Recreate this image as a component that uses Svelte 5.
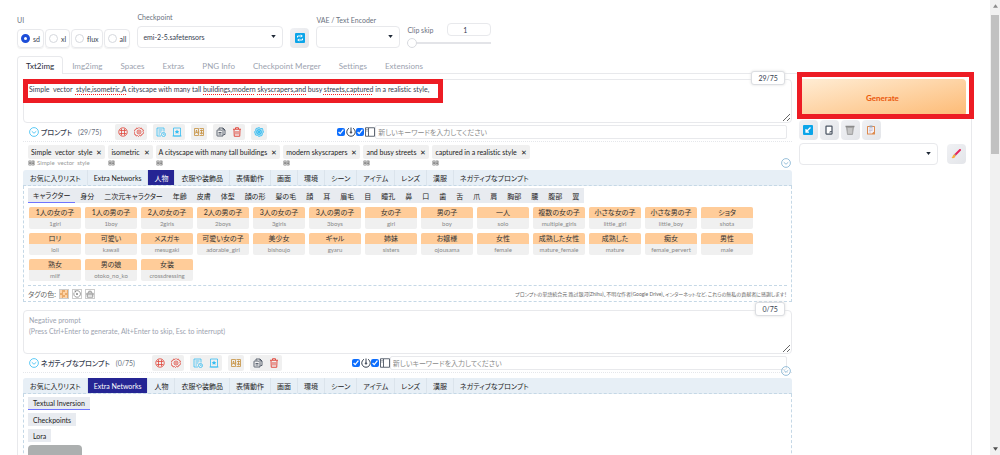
<script>
  const modes = ['sd', 'xl', 'flux', 'all'];
  const pages = ['Txt2img', 'Img2img', 'Spaces', 'Extras', 'PNG Info', 'Checkpoint Merger', 'Settings', 'Extensions'];
  const groups = [
    'お気に入りリスト', 'Extra Networks', '人物', '衣服や装飾品', '表情動作', '画面',
    '環境', 'シーン', 'アイテム', 'レンズ', '漢服', 'ネガティブなプロンプト'
  ];
  const subgroups = [
    'キャラクター', '身分', '二次元キャラクター', '年齢', '皮膚', '体型', '顔の形', '髪の毛', '顔', '耳',
    '眉毛', '目', '瞳孔', '鼻', '口', '歯', '舌', '爪', '肩', '胸部', '腰', '腹部', '翼'
  ];
  const cards = [
    ['1人の女の子', '1girl'], ['1人の男の子', '1boy'], ['2人の女の子', '2girls'], ['2人の男の子', '2boys'],
    ['3人の女の子', '3girls'], ['3人の男の子', '3boys'], ['女の子', 'girl'], ['男の子', 'boy'], ['一人', 'solo'],
    ['複数の女の子', 'multiple_girls'], ['小さな女の子', 'little_girl'], ['小さな男の子', 'little_boy'], ['ショタ', 'shota'],
    ['ロリ', 'loli'], ['可愛い', 'kawaii'], ['メスガキ', 'mesugaki'], ['可愛い女の子', 'adorable_girl'],
    ['美少女', 'bishoujo'], ['ギャル', 'gyaru'], ['姉妹', 'sisters'], ['お嬢様', 'ojousama'], ['女性', 'female'],
    ['成熟した女性', 'mature_female'], ['成熟した', 'mature'], ['痴女', 'female_pervert'], ['男性', 'male'],
    ['熟女', 'milf'], ['男の娘', 'otoko_no_ko'], ['女装', 'crossdressing']
  ];
  const chips = [
    { text: 'Simple  vector  style', local: 'Simple  vector  style' },
    { text: 'isometric' },
    { text: 'A cityscape with many tall buildings' },
    { text: 'modern skyscrapers' },
    { text: 'and busy streets' },
    { text: 'captured in a realistic style' }
  ];
  // [text, flagged by the spell checker]
  const pieces = [
    ['Simple  vector  ', false], ['style,isometric,A', true], [' cityscape with many tall ', false],
    ['buildings,modern', true], [' ', false], ['skyscrapers,and', true], [' busy ', false],
    ['streets,captured', true], [' in a realistic style,', false]
  ];

  let mode = $state('sd');
  let prompt = $state(pieces.map((p) => p[0]).join(''));
  let negative = $state('');
  let skip = $state(1);
</script>

{#snippet icon(name)}
  <svg class="icon" viewBox="0 0 20 20" fill="none" stroke="currentColor" stroke-width="1.6" aria-hidden="true">
    {#if name === 'globe'}
      <circle cx="10" cy="10" r="8.5" />
      <path d="M3 7h14M3 13h14M7 3v14M13 3v14" />
    {:else if name === 'gear'}
      <path d="M10 1l2 2 3-1 1 3 3 1-1 3 1 2-1 3-3 1-1 3-3-1-2 2-2-2-3 1-1-3-3-1 1-3-1-2 1-3 3-1 1-3 3 1z" />
      <circle cx="10" cy="10" r="4" /><circle cx="10" cy="10" r="1" />
    {:else if name === 'history'}
      <path d="M16 9V2H2v16h8M5 6h8M5 10h6M5 14h3" />
      <circle cx="15" cy="15" r="4" /><path d="M15 13v2h2" />
    {:else if name === 'favorite'}
      <path d="M3 2h14v16H3zM1 18h18" />
      <path d="M10 5l1.500 3 3 .4-2 2 .5 3-3-1.500-3 1.500.5-3-2-2 3-.4z" fill="currentColor" stroke="none" />
    {:else if name === 'translate'}
      <path d="M1 3h8v14H1zM11 3h8v14h-8M3 13l2-7 2 7M4 11h3M12 7h6M15 5v10M12 14l3-4 3 4M9 10h2" />
    {:else if name === 'copy'}
      <path d="M6 5V2h8l4 4v9h-3M14 2v4h4" />
      <path d="M3 6h8l3 3v9H3a1 1 0 0 1-1-1V7a1 1 0 0 1 1-1zM5 11h6M5 14h6" />
    {:else if name === 'trash'}
      <path d="M2 4.500h16M7 4V1.500h6V4M4 5l.5 13.500h11L16 5M8 8v7M12 8v7" stroke-width="2" />
    {:else if name === 'ai'}
      <path d="M10 1l3 2 4 0 1 4 1 3-2 3-1 4-4 1-2 1-3-2-4-1-1-4-1-2 2-3 1-4 4-1z" fill="currentColor" fill-opacity=".35" />
      <circle cx="10" cy="10" r="5" /><path d="M10 5v10M5 10h10M6 6l8 8M14 6l-8 8" />
    {:else if name === 'chevron'}
      <circle cx="10" cy="10" r="8.800" /><path d="M5.500 8.500l4.500 4 4.500-4" />
    {:else if name === 'power'}
      <path d="M6 2.500a8.500 8.500 0 1 0 8 0M10 1v9" stroke-width="2" /><circle cx="10" cy="11" r="1.500" fill="currentColor" />
    {:else if name === 'panel'}
      <path d="M1 1.500h18v17H1zM7 2v16M3 5h2M3 8h2" />
    {:else if name === 'reset'}
      <path d="M5 3.500A8.300 8.300 0 1 1 3 6M5 1v3.500h3" /><circle cx="10" cy="10" r="1.500" fill="currentColor" />
    {:else if name === 'brush'}
      <path d="M2 8h16v4H2zM7 8V3h6v5M3 12v6h14v-6" />
    {:else if name === 'sync'}
      <rect x="0" y="0" width="20" height="20" rx="2" fill="#0ba5e9" stroke="none" />
      <path d="M5 9V6h9M12 3.500L14.500 6 12 8.500M15 11v3H6M8 11.500L5.500 14 8 16.500" stroke="#fff" stroke-width="2" />
    {:else if name === 'restore'}
      <rect x="0" y="0" width="20" height="20" rx="2" fill="#0ba5e9" stroke="none" />
      <path d="M15 5l-8 8M6 8v6h6" stroke="#fff" stroke-width="2.500" />
    {:else if name === 'page'}
      <rect x="4" y="2" width="12" height="16" rx="1" fill="#fff" stroke="#4b5563" stroke-width="2.500" />
      <path d="M12 17v-4h4" stroke="#4b5563" />
    {:else if name === 'bin'}
      <path d="M3 4l2 15h10l2-15z" fill="#b6b6b6" stroke="#9a9a9a" /><path d="M1 3h18" stroke="#8b8b8b" stroke-width="3" />
      <path d="M8 6v11M12 6v11" stroke="#ddd" />
    {:else if name === 'clipboard'}
      <rect x="2" y="2" width="16" height="17" rx="1" fill="#dd8a4c" stroke="none" />
      <path d="M4 4h12v9l-4 4H4z" fill="#f3f0f7" stroke="none" /><path d="M7 1h6v4H7z" fill="#9aa5b5" stroke="none" />
      <path d="M6 8h8M6 11h7M6 14h4" stroke="#a9a0b8" stroke-width="1" />
    {:else if name === 'paint'}
      <path d="M18 2L9 11" stroke="#e6245c" stroke-width="4" stroke-linecap="round" />
      <path d="M9 11l-2 2" stroke="#8d99a8" stroke-width="4" /><path d="M7 11c-4 0-3 5-6 7 5 1 8-1 8-5z" fill="#fbab3c" stroke="none" />
    {/if}
  </svg>
{/snippet}

{#snippet arrow()}
  <svg class="arrow" viewBox="0 0 6 4" aria-hidden="true"><path d="M0 0h6L3 4z" fill="currentColor" /></svg>
{/snippet}

{#snippet toolbar(title, count, positive)}
  <div class="toolbar">
    <button class="fold" aria-label="折りたたむ">{@render icon('chevron')}</button>
    <strong>{title}</strong>
    <span class="count">({count})</span>
    <div class="tools">
      <div class="tool red">
        <button aria-label="言語">{@render icon('globe')}</button>
        <button aria-label="設定">{@render icon('gear')}</button>
      </div>
      <div class="tool blue">
        <button aria-label="履歴">{@render icon('history')}</button>
        <button aria-label="お気に入り">{@render icon('favorite')}</button>
      </div>
      <div class="tool gold"><button aria-label="翻訳">{@render icon('translate')}</button></div>
      <div class="tool">
        <button aria-label="コピー">{@render icon('copy')}</button>
        <button class="red" aria-label="削除">{@render icon('trash')}</button>
      </div>
      {#if positive}
        <div class="tool blue"><button aria-label="AI">{@render icon('ai')}</button></div>
      {/if}
    </div>
    <label class="toggle"><input type="checkbox" checked aria-label="自動入力" />{@render icon('power')}</label>
    <label class="toggle"><input type="checkbox" checked aria-label="パネル" />{@render icon('panel')}</label>
    <input class="keyword" type="text" placeholder="新しいキーワードを入力してください" aria-label="キーワード" />
  </div>
{/snippet}

{#snippet groupTabs(active)}
  <div class="groups">
    {#each groups as g}<button class:active={g === active}>{g}</button>{/each}
  </div>
{/snippet}

<div class="window">
  <main>
    <header>
      <fieldset class="field">
        <legend>UI</legend>
        <div class="radios">
          {#each modes as m}
            <label><input type="radio" name="mode" value={m} bind:group={mode} />{m}</label>
          {/each}
        </div>
      </fieldset>
      <div class="field ckpt">
        <label for="ckpt">Checkpoint</label>
        <div class="select">
          <select id="ckpt"><option>emi-2-5.safetensors</option></select>
          {@render arrow()}
        </div>
      </div>
      <button class="square" aria-label="Refresh">{@render icon('sync')}</button>
      <div class="field vae">
        <label for="vae">VAE / Text Encoder</label>
        <div class="select">
          <select id="vae"><option></option></select>
          {@render arrow()}
        </div>
      </div>
      <div class="clip">
        <div class="clip-head">
          <label for="skip">Clip skip</label>
          <input id="skip" type="text" bind:value={skip} />
        </div>
        <input type="range" min="1" max="12" bind:value={skip} aria-label="Clip skip" />
      </div>
    </header>

    <nav>
      {#each pages as p, i}<button class:active={i === 0}>{p}</button>{/each}
    </nav>

    <div class="panel">
      <div class="col-main">
        <div class="prompt">
          <div class="spell" aria-hidden="true">{#each pieces as [text, bad]}<span class:bad>{text}</span>{/each}</div>
          <textarea bind:value={prompt} aria-label="Prompt" spellcheck="false"></textarea>
          <span class="tokens">29/75</span>
          <div class="mark mark-prompt"></div>
        </div>
        {@render toolbar('プロンプト', '29/75', true)}
        <div class="chips">
          {#each chips as c}
            <div class="chip">
              <span class="chip-text">{c.text}<button aria-label="削除">✕</button></span>
              <span class="chip-local">{@render icon('translate')}{c.local ?? ''}</span>
            </div>
          {/each}
          <button class="more" aria-label="もっと見る">{@render icon('chevron')}</button>
        </div>
        {@render groupTabs('人物')}
        <div class="tags">
          <div class="subgroups">
            {#each subgroups as s, i}<button class:active={i === 0}>{s}</button>{/each}
          </div>
          <div class="cards">
            {#each cards as [local, tag]}
              <button class="card"><b>{local}</b><span>{tag}</span></button>
            {/each}
          </div>
          <footer>
            <span>タグの色:</span>
            <button class="swatch" aria-label="色"></button>
            <button aria-label="リセット">{@render icon('reset')}</button>
            <button aria-label="クリア">{@render icon('brush')}</button>
            <small>プロンプトの単語統合元 路过银河(Zhihu)、不明な作者(Google Drive)、インターネットなど, これらの無私の貢献者に感謝します！</small>
          </footer>
        </div>

        <div class="prompt negative">
          <textarea
            bind:value={negative}
            aria-label="Negative prompt"
            placeholder={'Negative prompt\n(Press Ctrl+Enter to generate, Alt+Enter to skip, Esc to interrupt)'}
          ></textarea>
          <span class="tokens">0/75</span>
        </div>
        {@render toolbar('ネガティブなプロンプト', '0/75', false)}
        <div class="chips empty">
          <button class="more" aria-label="もっと見る">{@render icon('chevron')}</button>
        </div>
        {@render groupTabs('Extra Networks')}
        <div class="tags networks">
          <button class="active">Textual Inversion</button>
          <button>Checkpoints</button>
          <button>Lora</button>
          <div class="thumb"></div>
        </div>
      </div>

      <div class="col-side">
        <div class="run">
          <button class="generate">Generate</button>
          <div class="mark mark-run"></div>
        </div>
        <div class="actions">
          <button class="square" aria-label="Restore">{@render icon('restore')}</button>
          <button class="square" aria-label="Paste">{@render icon('page')}</button>
          <button class="square" aria-label="Clear">{@render icon('bin')}</button>
          <button class="square" aria-label="Apply style">{@render icon('clipboard')}</button>
        </div>
        <div class="styles">
          <div class="select">
            <select aria-label="Styles"><option></option></select>
            {@render arrow()}
          </div>
          <button class="square" aria-label="Edit styles">{@render icon('paint')}</button>
        </div>
      </div>
    </div>
  </main>

  <div class="scroll" aria-hidden="true">
    <svg viewBox="0 0 6 4"><path d="M0 4h6L3 0z" fill="#8a8a8a" /></svg>
    <div class="bar"></div>
    <svg viewBox="0 0 6 4"><path d="M0 0h6L3 4z" fill="#505050" /></svg>
  </div>
</div>

<style>
  :global(body) {
    background: #fff;
  }
  .window {
    --line: #e8e9ec;
    display: grid;
    grid-template-columns: 1fr 10px;
    height: 100vh;
    overflow: hidden;
    font: 7px/12px Lato, 'Noto Sans CJK JP', sans-serif;
    font-feature-settings: 'palt', 'liga' 0;
    color: #374151;
  }
  .window * {
    box-sizing: border-box;
  }
  button,
  input,
  select,
  textarea {
    margin: 0;
    padding: 0;
    border: 0;
    background: none;
    color: inherit;
    font: inherit;
    font-feature-settings: inherit;
  }
  button {
    white-space: nowrap;
  }
  .icon {
    display: block;
    width: 10px;
    height: 10px;
    flex-shrink: 0;
  }
  main {
    min-width: 0;
    padding: 0 18px 0 17px;
    overflow: hidden;
  }

  header {
    display: flex;
    align-items: flex-end;
    gap: 7px;
    height: 48px;
  }
  .field {
    display: flex;
    flex-direction: column;
    margin: 0;
    padding: 0;
    border: 0;
    min-width: 0;
    color: #6b7280;
  }
  .radios {
    display: flex;
    gap: 1px;
    padding-top: 3px;
  }
  legend {
    padding: 0;
  }
  .radios label {
    display: flex;
    align-items: center;
    gap: 3px;
    height: 19px;
    padding: 0 3px;
    border: 1px solid var(--line);
    border-radius: 4px;
    box-shadow: 0 1px 1px #f1f1f1;
    color: #374151;
  }
  .radios input {
    appearance: none;
    width: 9px;
    height: 9px;
    border: 1px solid #d5d8dd;
    border-radius: 50%;
    background: #fff;
  }
  .radios input:checked {
    border: 3px solid #1d4ed8;
  }
  .ckpt {
    width: 146px;
    gap: 3px;
  }
  .vae {
    width: 84px;
  }
  .select {
    position: relative;
    height: 22px;
    flex: 1 0 22px;
  }
  .select select {
    appearance: none;
    width: 100%;
    height: 100%;
    padding: 0 5px;
    border: 1px solid var(--line);
    border-radius: 4px;
    background: #fff;
    color: #374151;
  }
  .arrow {
    position: absolute;
    right: 7px;
    top: 9px;
    width: 5px;
    height: 3px;
    color: #1f2937;
  }
  .square {
    display: grid;
    place-items: center;
    width: 19px;
    height: 20px;
    border-radius: 4px;
    background: linear-gradient(135deg, #f0f1f4, #e3e5e9);
  }
  .clip {
    width: 84px;
  }
  .clip-head {
    display: flex;
    justify-content: space-between;
    align-items: center;
    color: #6b7280;
  }
  .clip-head input {
    width: 44px;
    height: 13px;
    border: 1px solid var(--line);
    border-radius: 4px;
    text-align: center;
    padding-right: 8px;
    color: #374151;
  }
  .clip > input {
    appearance: none;
    display: block;
    width: 100%;
    height: 10px;
    margin-top: 2px;
    background: linear-gradient(#e3e4e8, #e3e4e8) center / 100% 2px no-repeat;
  }
  .clip > input::-webkit-slider-thumb {
    appearance: none;
    width: 10px;
    height: 10px;
    border: 1px solid #d9dbe0;
    border-radius: 50%;
    background: #fff;
  }

  nav {
    display: flex;
    height: 18px;
    margin: 8px 0 -1px;
  }
  nav button {
    padding: 0 8px;
    border: 1px solid transparent;
    border-bottom: 0;
    font-size: 8px;
    color: #9ca3af;
  }
  nav button.active {
    position: relative;
    border-color: var(--line);
    border-radius: 4px 4px 0 0;
    background: #fff;
    color: #1f2937;
  }
  .panel {
    display: grid;
    grid-template-columns: 46fr 10fr;
    gap: 7px;
    min-height: 400px;
    padding: 5px 5px 0;
    border: 1px solid var(--line);
  }
  .col-main {
    min-width: 0;
  }

  .prompt {
    position: relative;
    height: 44px;
  }
  .prompt textarea,
  .spell {
    position: relative;
    display: block;
    width: 100%;
    height: 100%;
    padding: 4px 5px;
    border: 1px solid var(--line);
    border-radius: 4px;
    line-height: 11px;
    white-space: pre-wrap;
  }
  .spell {
    position: absolute;
    inset: 0;
    border-color: transparent;
    color: transparent;
  }
  .bad {
    text-decoration-line: underline;
    text-decoration-style: dotted;
    text-decoration-color: #ff2020;
    text-decoration-thickness: 1px;
    text-underline-offset: 2px;
  }
  .negative {
    margin-top: 8px;
  }
  textarea::placeholder {
    color: #9ca3af;
  }
  .tokens {
    position: absolute;
    right: 7px;
    top: -8px;
    padding: 0 6px;
    border: 1px solid #dcdee2;
    border-radius: 3px;
    background: #fff;
    box-shadow: 0 0 3px #ddd;
  }
  .mark {
    position: absolute;
    border: 5px solid #ed1c24;
    pointer-events: none;
  }
  .mark-prompt {
    left: 0;
    top: 0;
    width: 420px;
    height: 24px;
  }

  .toolbar {
    display: flex;
    align-items: center;
    height: 19px;
    padding: 0 5px 0 6px;
    border-bottom: 1px dotted #e5e7eb;
  }
  .fold,
  .blue {
    color: #35bdf2;
  }
  .toolbar strong {
    margin: 0 6px 0 2px;
    font-weight: 500;
  }
  .count {
    min-width: 22px;
    margin-right: 14px;
    color: #6b7280;
  }
  .tools {
    display: flex;
    gap: 6px;
    margin-right: 70px;
  }
  .tool {
    display: flex;
    gap: 6px;
    padding: 3px;
    border-radius: 2px;
    background: #f0f0f0;
  }
  .red {
    color: #e04a3f;
  }
  .gold {
    color: #c58f3c;
  }
  .toggle {
    display: flex;
    align-items: center;
    gap: 1px;
  }
  .toggle input {
    width: 8px;
    height: 8px;
    accent-color: #0d6efd;
  }
  .keyword {
    flex: 1;
    min-width: 0;
    height: 14px;
    padding: 0 2px;
    border: 1px solid var(--line);
    border-radius: 2px;
  }
  .keyword::placeholder {
    color: #8a8a8a;
  }

  .chips {
    position: relative;
    display: flex;
    gap: 3px;
    height: 28px;
    padding: 3px 5px 0;
  }
  .chips.empty {
    height: 5px;
  }
  .chip-text {
    display: flex;
    gap: 4px;
    height: 14px;
    padding: 0 3px;
    border-radius: 2px;
    background: #f0f0f0;
    line-height: 14px;
    white-space: pre;
    color: #222;
  }
  .chip-local {
    display: flex;
    align-items: center;
    gap: 2px;
    height: 8px;
    font-size: 6px;
    line-height: 8px;
    white-space: pre;
    color: #999;
  }
  .chip-local .icon {
    width: 7px;
    height: 6px;
    color: #444;
  }
  .more {
    position: absolute;
    right: 1px;
    bottom: 2px;
    color: #7fb0d0;
  }

  .groups {
    display: flex;
    height: 16px;
    padding-left: 1px;
    border-bottom: 1px dashed #c5d8e6;
    border-radius: 3px 3px 0 0;
    background: #e7eff6;
    color: #222;
  }
  .groups button {
    padding: 0 6px;
    border-right: 1px solid #dbe4ec;
  }
  .groups button:last-child {
    border-right: 0;
  }
  .groups .active {
    background: #252594;
    color: #fff;
  }
  .tags {
    padding: 2px 4px 0;
    border: 1px dashed #c5d8e6;
    border-top: 0;
  }
  .subgroups {
    display: flex;
    width: fit-content;
    height: 15px;
    background: #e8ebf0;
    color: #222;
  }
  .subgroups button {
    padding: 0 5px;
  }
  .subgroups .active,
  .networks .active {
    border-bottom: 1px solid #6f74ff;
  }
  .cards {
    display: flex;
    flex-wrap: wrap;
    gap: 4px;
    padding: 4px 30px 4px 1px;
  }
  .card {
    width: 52px;
    height: 22px;
    border-radius: 2px;
    overflow: hidden;
    background: #f0f0f0;
    font-size: 6px;
    line-height: 11px;
    color: #888;
  }
  .card b {
    display: block;
    background: #ffcc99;
    font-size: 7px;
    font-weight: 400;
    color: #333;
  }
  .card span {
    display: block;
  }
  footer {
    display: flex;
    align-items: center;
    gap: 3px;
    height: 16px;
    border-top: 1px dashed #c5d8e6;
    color: #666;
  }
  footer button {
    width: 10px;
    height: 10px;
    border: 1px solid #ccc;
  }
  footer button :global(.icon) {
    width: 8px;
    height: 8px;
  }
  .swatch {
    background: repeating-conic-gradient(#e9ab6c 0 25%, #ffd3a6 0 50%) 0 0 / 5px 5px;
  }
  footer small {
    margin-left: auto;
    font-size: 5px;
  }

  .networks {
    display: flex;
    flex-direction: column;
    align-items: flex-start;
    gap: 3px;
    height: 90px;
    padding-top: 3px;
  }
  .networks button {
    height: 14px;
    padding: 0 5px;
    background: #e8ebf0;
    color: #222;
  }
  .thumb {
    width: 54px;
    height: 40px;
    border-radius: 4px 4px 0 0;
    background: #acafaf;
  }

  .run {
    position: relative;
  }
  .generate {
    display: block;
    width: 100%;
    height: 37px;
    border-radius: 4px;
    background: linear-gradient(to bottom right, #ffedd5, #fdba74);
    font-size: 8px;
    font-weight: 700;
    color: #ea580c;
  }
  .mark-run {
    inset: -7px -8px -3px -2px;
  }
  .actions {
    display: flex;
    gap: 2px;
    margin-top: 4px;
  }
  .styles {
    display: flex;
    align-items: center;
    gap: 9px;
    margin-top: 3px;
  }

  .scroll {
    display: flex;
    flex-direction: column;
    align-items: center;
    padding: 4px 0;
    gap: 7px;
    background: #f1f1f1;
  }
  .scroll svg {
    width: 5px;
    height: 4px;
  }
  .scroll .bar {
    width: 8px;
    height: 31%;
    margin-bottom: auto;
    background: #c1c1c1;
  }
</style>
